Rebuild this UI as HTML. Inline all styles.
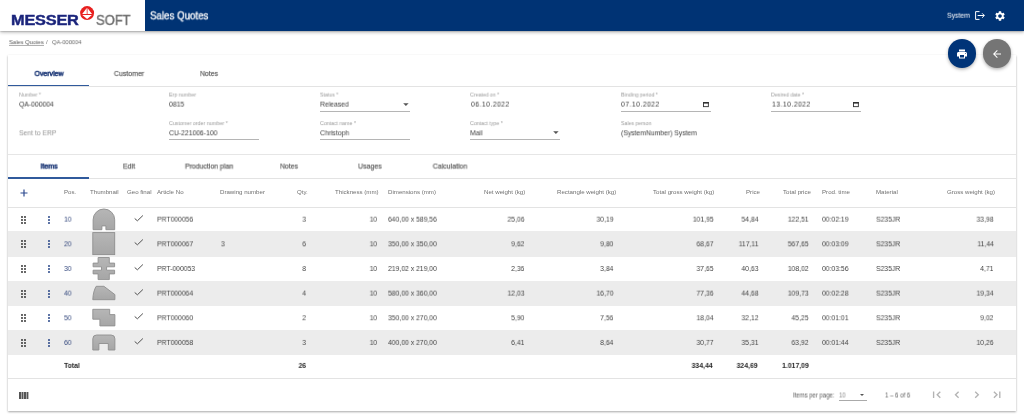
<!DOCTYPE html>
<html><head><meta charset="utf-8">
<style>
*{box-sizing:border-box;margin:0;padding:0}
html,body{width:1024px;height:415px;overflow:hidden;background:#fff;font-family:"Liberation Sans",sans-serif;color:#333}
.t{position:absolute;line-height:1;white-space:nowrap}
.b{position:absolute}
svg.b{overflow:visible}
</style></head><body><div id="root" style="position:absolute;left:0;top:0;width:1024px;height:415px;overflow:hidden;filter:blur(0.3px)">
<div class="b" style="left:0px;top:0px;width:1024px;height:31px;background:#fff;box-shadow:0 1.2px 1.5px rgba(0,0,0,.25), 0 1.5px 3.5px rgba(0,0,0,.3)"></div>
<div class="b" style="left:145px;top:0px;width:879px;height:31px;background:#003374;"></div>
<div class="t" style="left:10.90px;top:13px;font-size:13.8px;color:#1b2477;font-weight:bold;transform:translateY(0.91px) scaleX(1.185);transform-origin:0 0;will-change:transform;letter-spacing:-0.2px;-webkit-text-stroke:0.4px #1f2a88">MESSER</div>
<div class="t" style="left:96.30px;top:13px;font-size:13.8px;color:#6c6c6c;transform:translateY(0.91px) scaleX(0.94);transform-origin:0 0;will-change:transform;-webkit-text-stroke:0.45px #7b7b7b">SOFT</div>
<svg class="b" style="left:76px;top:2px" width="22" height="22" viewBox="76 2 22 22">
<circle cx="87.1" cy="13.1" r="7.0" fill="#e8201f"/>
<path fill="#fff" d="M86.75 8.0 L82.2 14.1 H86.75 Z M87.5 8.0 V14.1 H92.0 Z M82.3 15.0 H91.9 L87.1 19.0 Z"/>
</svg>
<div class="t" style="left:149.80px;top:11px;font-size:10.24px;color:#fff;transform:translateY(0.35px) scaleX(0.95);transform-origin:0 0;will-change:transform;-webkit-text-stroke-width:0.3px">Sales Quotes</div>
<div class="t" style="left:946.80px;top:12px;font-size:7.17px;color:#fff;transform:translateY(0.75px) scaleX(0.958);transform-origin:0 0;will-change:transform;">System</div>
<svg class="b" style="left:974px;top:10px" width="12" height="11" viewBox="0 0 12 11">
<path d="M5.5 1.6 H1.6 V9.4 H5.5" fill="none" stroke="#fff" stroke-width="1"/>
<path d="M3.6 5.5 H10.3 M8.1 3.3 L10.3 5.5 L8.1 7.7" fill="none" stroke="#fff" stroke-width="1"/>
</svg>
<svg class="b" style="left:994px;top:9.5px" width="12" height="12" viewBox="0 0 24 24">
<path fill="#fff" d="M19.14 12.94c.04-.3.06-.61.06-.94 0-.32-.02-.64-.07-.94l2.03-1.58a.49.49 0 0 0 .12-.61l-1.92-3.32a.488.488 0 0 0-.59-.22l-2.39.96c-.5-.38-1.030-.7-1.62-.94l-.36-2.54a.484.484 0 0 0-.48-.41h-3.84c-.24 0-.43.17-.47.41l-.36 2.54c-.59.24-1.13.57-1.62.94l-2.39-.96c-.22-.08-.47 0-.59.22L2.74 8.87c-.12.21-.08.47.12.61l2.03 1.58c-.05.3-.09.63-.09.94s.02.64.07.94l-2.03 1.58a.49.49 0 0 0-.12.61l1.92 3.32c.12.22.37.29.59.22l2.39-.96c.5.38 1.03.7 1.62.94l.36 2.54c.05.24.24.41.48.41h3.84c.24 0 .44-.17.47-.41l.36-2.54c.59-.24 1.13-.56 1.62-.94l2.39.96c.22.08.47 0 .59-.22l1.92-3.32c.12-.22.07-.47-.12-.61l-2.01-1.58zM12 15.6c-1.98 0-3.6-1.62-3.6-3.6s1.62-3.6 3.6-3.6 3.6 1.62 3.6 3.6-1.62 3.6-3.6 3.6z"/>
</svg>
<div class="t" style="left:8.70px;top:39px;font-size:6.14px;color:#595959;transform:translateY(0.11px) scaleX(0.946);transform-origin:0 0;will-change:transform;">Sales Quotes</div>
<div class="b" style="left:8.7px;top:44.9px;width:34.9px;height:0.6px;background:#b0b0b0;"></div>
<div class="t" style="left:46.30px;top:39px;font-size:6.14px;color:#777777;transform:translateY(0.11px) scaleX(1.0);transform-origin:0 0;will-change:transform;">/</div>
<div class="t" style="left:51.50px;top:39px;font-size:6.14px;color:#686868;transform:translateY(0.11px) scaleX(0.94);transform-origin:0 0;will-change:transform;">QA-000004</div>
<div class="b" style="left:8px;top:55px;width:1008px;height:356px;background:#fff;box-shadow:0 0.5px 2px rgba(0,0,0,.35)"></div>
<div class="b" style="left:947.8px;top:39.3px;width:28.4px;height:28.4px;background:#003478;border-radius:50%;box-shadow:0 1.5px 3.5px rgba(0,0,0,.3)"></div>
<div class="b" style="left:982.6px;top:39.3px;width:28.4px;height:28.4px;background:#757575;border-radius:50%;box-shadow:0 1.5px 3.5px rgba(0,0,0,.3)"></div>
<svg class="b" style="left:956px;top:47.5px" width="12" height="12" viewBox="0 0 24 24">
<path fill="#fff" d="M19 8H5c-1.66 0-3 1.34-3 3v6h4v4h12v-4h4v-6c0-1.66-1.34-3-3-3zm-3 11H8v-5h8v5zm3-7c-.55 0-1-.45-1-1s.45-1 1-1 1 .45 1 1-.45 1-1 1zm-1-9H6v4h12V3z"/>
</svg>
<svg class="b" style="left:990.8px;top:47.5px" width="12" height="12" viewBox="0 0 24 24">
<path fill="#fff" d="M20 11H7.83l5.59-5.59L12 4l-8 8 8 8 1.41-1.41L7.83 13H20v-2z"/>
</svg>
<div class="t" style="left:-51.40px;width:200px;text-align:center;top:70px;font-size:7.17px;color:#27417d;transform:translateY(0.90px) scaleX(0.97);transform-origin:50% 0;will-change:transform;-webkit-text-stroke-width:0.6px">Overview</div>
<div class="t" style="left:29.00px;width:200px;text-align:center;top:70px;font-size:7.17px;color:#696969;transform:translateY(0.90px) scaleX(0.97);transform-origin:50% 0;will-change:transform;-webkit-text-stroke-width:0.25px">Customer</div>
<div class="t" style="left:109.40px;width:200px;text-align:center;top:70px;font-size:7.17px;color:#696969;transform:translateY(0.90px) scaleX(0.97);transform-origin:50% 0;will-change:transform;-webkit-text-stroke-width:0.25px">Notes</div>
<div class="b" style="left:8px;top:85.8px;width:1008px;height:0.8px;background:#e3e3e3;"></div>
<div class="b" style="left:8.2px;top:84.8px;width:80.7px;height:1.4px;background:#305a9c;"></div>
<div class="t" style="left:18.80px;top:92px;font-size:5.38px;color:#9a9a9a;transform:translateY(0.51px) scaleX(0.97);transform-origin:0 0;will-change:transform;">Number *</div>
<div class="t" style="left:18.80px;top:101px;font-size:7.17px;color:#3b3b3b;transform:translateY(0.60px) scaleX(0.95);transform-origin:0 0;will-change:transform;">QA-000004</div>
<div class="t" style="left:169.00px;top:92px;font-size:5.38px;color:#9a9a9a;transform:translateY(0.51px) scaleX(0.97);transform-origin:0 0;will-change:transform;">Erp number</div>
<div class="t" style="left:169.00px;top:101px;font-size:7.17px;color:#3b3b3b;transform:translateY(0.60px) scaleX(0.95);transform-origin:0 0;will-change:transform;">0815</div>
<div class="t" style="left:319.75px;top:92px;font-size:5.38px;color:#9a9a9a;transform:translateY(0.51px) scaleX(0.97);transform-origin:0 0;will-change:transform;">Status *</div>
<div class="t" style="left:319.75px;top:101px;font-size:7.17px;color:#3b3b3b;transform:translateY(0.60px) scaleX(0.95);transform-origin:0 0;will-change:transform;">Released</div>
<div class="b" style="left:319.75px;top:111.0px;width:90px;height:0.8px;background:#b5b5b5;"></div>
<svg class="b" style="left:402.75px;top:102.50px" width="6" height="4" viewBox="0 0 6 4"><path d="M0.2 0.2 H5.6 L2.9 2.9 Z" fill="#555"/></svg>
<div class="t" style="left:470.30px;top:92px;font-size:5.38px;color:#9a9a9a;transform:translateY(0.51px) scaleX(0.97);transform-origin:0 0;will-change:transform;">Created on *</div>
<div class="t" style="left:471.00px;top:101px;font-size:7.17px;color:#3b3b3b;transform:translateY(0.60px) scaleX(0.95);transform-origin:0 0;will-change:transform;letter-spacing:0.5px">06.10.2022</div>
<div class="t" style="left:620.75px;top:92px;font-size:5.38px;color:#9a9a9a;transform:translateY(0.51px) scaleX(0.97);transform-origin:0 0;will-change:transform;">Binding period *</div>
<div class="t" style="left:621.25px;top:101px;font-size:7.17px;color:#3b3b3b;transform:translateY(0.60px) scaleX(0.95);transform-origin:0 0;will-change:transform;letter-spacing:0.5px">07.10.2022</div>
<div class="b" style="left:620.75px;top:111.0px;width:90px;height:0.8px;background:#b5b5b5;"></div>
<svg class="b" style="left:703.15px;top:101.60px" width="6" height="6" viewBox="0 0 6 6"><rect x="0.45" y="0.45" width="4.9" height="4.2" fill="none" stroke="#333" stroke-width="0.9"/><rect x="0" y="0" width="5.8" height="1.6" fill="#333"/></svg>
<div class="t" style="left:771.00px;top:92px;font-size:5.38px;color:#9a9a9a;transform:translateY(0.51px) scaleX(0.97);transform-origin:0 0;will-change:transform;">Desired date *</div>
<div class="t" style="left:771.50px;top:101px;font-size:7.17px;color:#3b3b3b;transform:translateY(0.60px) scaleX(0.95);transform-origin:0 0;will-change:transform;letter-spacing:0.5px">13.10.2022</div>
<div class="b" style="left:771.0px;top:111.0px;width:90px;height:0.8px;background:#b5b5b5;"></div>
<svg class="b" style="left:853.40px;top:101.60px" width="6" height="6" viewBox="0 0 6 6"><rect x="0.45" y="0.45" width="4.9" height="4.2" fill="none" stroke="#333" stroke-width="0.9"/><rect x="0" y="0" width="5.8" height="1.6" fill="#333"/></svg>
<div class="t" style="left:18.80px;top:130px;font-size:7.17px;color:#939393;transform:translateY(0.30px) scaleX(0.95);transform-origin:0 0;will-change:transform;">Sent to ERP</div>
<div class="t" style="left:169.00px;top:121px;font-size:5.38px;color:#9a9a9a;transform:translateY(0.11px) scaleX(0.97);transform-origin:0 0;will-change:transform;">Customer order number *</div>
<div class="t" style="left:169.00px;top:130px;font-size:7.17px;color:#3b3b3b;transform:translateY(0.30px) scaleX(0.95);transform-origin:0 0;will-change:transform;">CU-221006-100</div>
<div class="b" style="left:169.0px;top:139.4px;width:90px;height:0.8px;background:#b5b5b5;"></div>
<div class="t" style="left:319.75px;top:121px;font-size:5.38px;color:#9a9a9a;transform:translateY(0.11px) scaleX(0.97);transform-origin:0 0;will-change:transform;">Contact name *</div>
<div class="t" style="left:319.75px;top:130px;font-size:7.17px;color:#3b3b3b;transform:translateY(0.30px) scaleX(0.95);transform-origin:0 0;will-change:transform;">Christoph</div>
<div class="b" style="left:319.75px;top:139.4px;width:90px;height:0.8px;background:#b5b5b5;"></div>
<div class="t" style="left:470.30px;top:121px;font-size:5.38px;color:#9a9a9a;transform:translateY(0.11px) scaleX(0.97);transform-origin:0 0;will-change:transform;">Contact type *</div>
<div class="t" style="left:470.30px;top:130px;font-size:7.17px;color:#3b3b3b;transform:translateY(0.30px) scaleX(0.95);transform-origin:0 0;will-change:transform;">Mail</div>
<div class="b" style="left:470.3px;top:139.4px;width:90px;height:0.8px;background:#b5b5b5;"></div>
<svg class="b" style="left:553.30px;top:131.20px" width="6" height="4" viewBox="0 0 6 4"><path d="M0.2 0.2 H5.6 L2.9 2.9 Z" fill="#555"/></svg>
<div class="t" style="left:620.75px;top:121px;font-size:5.38px;color:#9a9a9a;transform:translateY(0.11px) scaleX(0.97);transform-origin:0 0;will-change:transform;">Sales person</div>
<div class="t" style="left:620.75px;top:130px;font-size:7.17px;color:#3b3b3b;transform:translateY(0.30px) scaleX(0.95);transform-origin:0 0;will-change:transform;">(SystemNumber) System</div>
<div class="b" style="left:8px;top:154px;width:1008px;height:0.8px;background:#e6e6e6;"></div>
<div class="t" style="left:-51.40px;width:200px;text-align:center;top:163px;font-size:7.17px;color:#27417d;transform:translateY(0.55px) scaleX(0.97);transform-origin:50% 0;will-change:transform;-webkit-text-stroke-width:0.6px">Items</div>
<div class="t" style="left:28.85px;width:200px;text-align:center;top:163px;font-size:7.17px;color:#696969;transform:translateY(0.55px) scaleX(0.97);transform-origin:50% 0;will-change:transform;-webkit-text-stroke-width:0.25px">Edit</div>
<div class="t" style="left:109.10px;width:200px;text-align:center;top:163px;font-size:7.17px;color:#696969;transform:translateY(0.55px) scaleX(0.97);transform-origin:50% 0;will-change:transform;-webkit-text-stroke-width:0.25px">Production plan</div>
<div class="t" style="left:189.35px;width:200px;text-align:center;top:163px;font-size:7.17px;color:#696969;transform:translateY(0.55px) scaleX(0.97);transform-origin:50% 0;will-change:transform;-webkit-text-stroke-width:0.25px">Notes</div>
<div class="t" style="left:269.60px;width:200px;text-align:center;top:163px;font-size:7.17px;color:#696969;transform:translateY(0.55px) scaleX(0.97);transform-origin:50% 0;will-change:transform;-webkit-text-stroke-width:0.25px">Usages</div>
<div class="t" style="left:349.85px;width:200px;text-align:center;top:163px;font-size:7.17px;color:#696969;transform:translateY(0.55px) scaleX(0.97);transform-origin:50% 0;will-change:transform;-webkit-text-stroke-width:0.25px">Calculation</div>
<div class="b" style="left:8px;top:178.4px;width:1008px;height:0.8px;background:#e3e3e3;"></div>
<div class="b" style="left:8.2px;top:177.4px;width:80.7px;height:1.4px;background:#305a9c;"></div>
<svg class="b" style="left:19.6px;top:188.8px" width="8" height="8" viewBox="0 0 8 8"><path d="M4 0.5V7.5M0.5 4H7.5" stroke="#2d4a8f" stroke-width="1.2"/></svg>
<div class="t" style="left:63.90px;top:189px;font-size:6.14px;color:#707070;transform:translateY(0.41px) scaleX(1.0);transform-origin:0 0;will-change:transform;">Pos.</div>
<div class="t" style="left:90.00px;top:189px;font-size:6.14px;color:#707070;transform:translateY(0.41px) scaleX(1.0);transform-origin:0 0;will-change:transform;">Thumbnail</div>
<div class="t" style="left:127.00px;top:189px;font-size:6.14px;color:#707070;transform:translateY(0.41px) scaleX(1.0);transform-origin:0 0;will-change:transform;">Geo final</div>
<div class="t" style="left:156.80px;top:189px;font-size:6.14px;color:#707070;transform:translateY(0.41px) scaleX(1.0);transform-origin:0 0;will-change:transform;">Article No</div>
<div class="t" style="left:220.00px;top:189px;font-size:6.14px;color:#707070;transform:translateY(0.41px) scaleX(1.0);transform-origin:0 0;will-change:transform;">Drawing number</div>
<div class="t" style="right:716.20px;top:189px;font-size:6.14px;color:#707070;transform:translateY(0.41px) scaleX(1.0);transform-origin:100% 0;will-change:transform;">Qty.</div>
<div class="t" style="right:645.00px;top:189px;font-size:6.14px;color:#707070;transform:translateY(0.41px) scaleX(1.0);transform-origin:100% 0;will-change:transform;">Thickness (mm)</div>
<div class="t" style="left:387.80px;top:189px;font-size:6.14px;color:#707070;transform:translateY(0.41px) scaleX(1.0);transform-origin:0 0;will-change:transform;">Dimensions (mm)</div>
<div class="t" style="right:499.00px;top:189px;font-size:6.14px;color:#707070;transform:translateY(0.41px) scaleX(1.0);transform-origin:100% 0;will-change:transform;">Net weight (kg)</div>
<div class="t" style="right:408.20px;top:189px;font-size:6.14px;color:#707070;transform:translateY(0.41px) scaleX(1.0);transform-origin:100% 0;will-change:transform;">Rectangle weight (kg)</div>
<div class="t" style="right:309.50px;top:189px;font-size:6.14px;color:#707070;transform:translateY(0.41px) scaleX(1.0);transform-origin:100% 0;will-change:transform;">Total gross weight (kg)</div>
<div class="t" style="right:264.50px;top:189px;font-size:6.14px;color:#707070;transform:translateY(0.41px) scaleX(1.0);transform-origin:100% 0;will-change:transform;">Price</div>
<div class="t" style="right:213.50px;top:189px;font-size:6.14px;color:#707070;transform:translateY(0.41px) scaleX(1.0);transform-origin:100% 0;will-change:transform;">Total price</div>
<div class="t" style="left:821.80px;top:189px;font-size:6.14px;color:#707070;transform:translateY(0.41px) scaleX(1.0);transform-origin:0 0;will-change:transform;">Prod. time</div>
<div class="t" style="left:876.30px;top:189px;font-size:6.14px;color:#707070;transform:translateY(0.41px) scaleX(1.0);transform-origin:0 0;will-change:transform;">Material</div>
<div class="t" style="right:29.00px;top:189px;font-size:6.14px;color:#707070;transform:translateY(0.41px) scaleX(1.0);transform-origin:100% 0;will-change:transform;">Gross weight (kg)</div>
<div class="b" style="left:8px;top:206.8px;width:1008px;height:0.8px;background:#e3e3e3;"></div>
<svg class="b" style="left:21.05px;top:215.55px" width="6" height="9" viewBox="0 0 6 9" fill="#222"><circle cx="1" cy="1" r="0.9"/><circle cx="1" cy="4" r="0.9"/><circle cx="1" cy="7" r="0.9"/><circle cx="4" cy="1" r="0.9"/><circle cx="4" cy="4" r="0.9"/><circle cx="4" cy="7" r="0.9"/></svg>
<svg class="b" style="left:47.55px;top:215.55px" width="2" height="9" viewBox="0 0 2 9" fill="#1b3a80"><circle cx="1" cy="1" r="0.95"/><circle cx="1" cy="4" r="0.95"/><circle cx="1" cy="7" r="0.95"/></svg>
<div class="t" style="left:64.00px;top:215px;font-size:7.4px;color:#35497e;transform:translateY(0.65px) scaleX(0.92);transform-origin:0 0;will-change:transform;">10</div>
<svg class="b" style="left:90px;top:205px" width="28" height="150" viewBox="90 205 28 150"><defs><linearGradient id="g0" x1="0" y1="0" x2="0" y2="1"><stop offset="0" stop-color="#b6b6b6"/><stop offset="1" stop-color="#a6a6a6"/></linearGradient></defs><g fill="url(#g0)" stroke="#8e8e8e" stroke-width="0.9"><path d="M93.1 229.7 V219.8 A10.8 10.8 0 0 1 114.7 219.8 V229.7 H105.9 V225.9 H101.9 V229.7 Z"/></g></svg>
<svg class="b" style="left:133px;top:214.55px" width="11" height="8" viewBox="0 0 11 8"><path d="M1.7 3.5 L4.4 5.8 L9.9 0.5" fill="none" stroke="#505050" stroke-width="1.0"/></svg>
<div class="t" style="left:156.80px;top:215px;font-size:7.4px;color:#434343;transform:translateY(0.65px) scaleX(0.92);transform-origin:0 0;will-change:transform;">PRT000056</div>
<div class="t" style="right:717.70px;top:215px;font-size:7.4px;color:#434343;transform:translateY(0.65px) scaleX(0.92);transform-origin:100% 0;will-change:transform;">3</div>
<div class="t" style="right:646.70px;top:215px;font-size:7.4px;color:#434343;transform:translateY(0.65px) scaleX(0.92);transform-origin:100% 0;will-change:transform;">10</div>
<div class="t" style="left:387.80px;top:215px;font-size:7.4px;color:#434343;transform:translateY(0.65px) scaleX(0.92);transform-origin:0 0;will-change:transform;">640,00 x 589,56</div>
<div class="t" style="right:499.80px;top:215px;font-size:7.4px;color:#434343;transform:translateY(0.65px) scaleX(0.92);transform-origin:100% 0;will-change:transform;">25,06</div>
<div class="t" style="right:410.20px;top:215px;font-size:7.4px;color:#434343;transform:translateY(0.65px) scaleX(0.92);transform-origin:100% 0;will-change:transform;">30,19</div>
<div class="t" style="right:310.80px;top:215px;font-size:7.4px;color:#434343;transform:translateY(0.65px) scaleX(0.92);transform-origin:100% 0;will-change:transform;">101,95</div>
<div class="t" style="right:265.80px;top:215px;font-size:7.4px;color:#434343;transform:translateY(0.65px) scaleX(0.92);transform-origin:100% 0;will-change:transform;">54,84</div>
<div class="t" style="right:215.60px;top:215px;font-size:7.4px;color:#434343;transform:translateY(0.65px) scaleX(0.92);transform-origin:100% 0;will-change:transform;">122,51</div>
<div class="t" style="left:821.60px;top:215px;font-size:7.4px;color:#434343;transform:translateY(0.65px) scaleX(0.92);transform-origin:0 0;will-change:transform;">00:02:19</div>
<div class="t" style="left:876.30px;top:215px;font-size:7.4px;color:#434343;transform:translateY(0.65px) scaleX(0.92);transform-origin:0 0;will-change:transform;">S235JR</div>
<div class="t" style="right:30.50px;top:215px;font-size:7.4px;color:#434343;transform:translateY(0.65px) scaleX(0.92);transform-origin:100% 0;will-change:transform;">33,98</div>
<div class="b" style="left:8px;top:231.2px;width:1008px;height:25.5px;background:#ececec;"></div>
<svg class="b" style="left:21.05px;top:240.20px" width="6" height="9" viewBox="0 0 6 9" fill="#222"><circle cx="1" cy="1" r="0.9"/><circle cx="1" cy="4" r="0.9"/><circle cx="1" cy="7" r="0.9"/><circle cx="4" cy="1" r="0.9"/><circle cx="4" cy="4" r="0.9"/><circle cx="4" cy="7" r="0.9"/></svg>
<svg class="b" style="left:47.55px;top:240.20px" width="2" height="9" viewBox="0 0 2 9" fill="#1b3a80"><circle cx="1" cy="1" r="0.95"/><circle cx="1" cy="4" r="0.95"/><circle cx="1" cy="7" r="0.95"/></svg>
<div class="t" style="left:64.00px;top:240px;font-size:7.4px;color:#35497e;transform:translateY(0.30px) scaleX(0.92);transform-origin:0 0;will-change:transform;">20</div>
<svg class="b" style="left:90px;top:205px" width="28" height="150" viewBox="90 205 28 150"><defs><linearGradient id="g1" x1="0" y1="0" x2="0" y2="1"><stop offset="0" stop-color="#b6b6b6"/><stop offset="1" stop-color="#a6a6a6"/></linearGradient></defs><g fill="url(#g1)" stroke="#8e8e8e" stroke-width="0.9"><rect x="92.8" y="232.6" width="21.9" height="22"/></g></svg>
<svg class="b" style="left:133px;top:239.20px" width="11" height="8" viewBox="0 0 11 8"><path d="M1.7 3.5 L4.4 5.8 L9.9 0.5" fill="none" stroke="#505050" stroke-width="1.0"/></svg>
<div class="t" style="left:156.80px;top:240px;font-size:7.4px;color:#434343;transform:translateY(0.30px) scaleX(0.92);transform-origin:0 0;will-change:transform;">PRT000067</div>
<div class="t" style="left:220.50px;top:240px;font-size:7.4px;color:#434343;transform:translateY(0.30px) scaleX(0.92);transform-origin:0 0;will-change:transform;">3</div>
<div class="t" style="right:717.70px;top:240px;font-size:7.4px;color:#434343;transform:translateY(0.30px) scaleX(0.92);transform-origin:100% 0;will-change:transform;">6</div>
<div class="t" style="right:646.70px;top:240px;font-size:7.4px;color:#434343;transform:translateY(0.30px) scaleX(0.92);transform-origin:100% 0;will-change:transform;">10</div>
<div class="t" style="left:387.80px;top:240px;font-size:7.4px;color:#434343;transform:translateY(0.30px) scaleX(0.92);transform-origin:0 0;will-change:transform;">350,00 x 350,00</div>
<div class="t" style="right:499.80px;top:240px;font-size:7.4px;color:#434343;transform:translateY(0.30px) scaleX(0.92);transform-origin:100% 0;will-change:transform;">9,62</div>
<div class="t" style="right:410.20px;top:240px;font-size:7.4px;color:#434343;transform:translateY(0.30px) scaleX(0.92);transform-origin:100% 0;will-change:transform;">9,80</div>
<div class="t" style="right:310.80px;top:240px;font-size:7.4px;color:#434343;transform:translateY(0.30px) scaleX(0.92);transform-origin:100% 0;will-change:transform;">68,67</div>
<div class="t" style="right:265.80px;top:240px;font-size:7.4px;color:#434343;transform:translateY(0.30px) scaleX(0.92);transform-origin:100% 0;will-change:transform;">117,11</div>
<div class="t" style="right:215.60px;top:240px;font-size:7.4px;color:#434343;transform:translateY(0.30px) scaleX(0.92);transform-origin:100% 0;will-change:transform;">567,65</div>
<div class="t" style="left:821.60px;top:240px;font-size:7.4px;color:#434343;transform:translateY(0.30px) scaleX(0.92);transform-origin:0 0;will-change:transform;">00:03:09</div>
<div class="t" style="left:876.30px;top:240px;font-size:7.4px;color:#434343;transform:translateY(0.30px) scaleX(0.92);transform-origin:0 0;will-change:transform;">S235JR</div>
<div class="t" style="right:30.50px;top:240px;font-size:7.4px;color:#434343;transform:translateY(0.30px) scaleX(0.92);transform-origin:100% 0;will-change:transform;">11,44</div>
<svg class="b" style="left:21.05px;top:264.85px" width="6" height="9" viewBox="0 0 6 9" fill="#222"><circle cx="1" cy="1" r="0.9"/><circle cx="1" cy="4" r="0.9"/><circle cx="1" cy="7" r="0.9"/><circle cx="4" cy="1" r="0.9"/><circle cx="4" cy="4" r="0.9"/><circle cx="4" cy="7" r="0.9"/></svg>
<svg class="b" style="left:47.55px;top:264.85px" width="2" height="9" viewBox="0 0 2 9" fill="#1b3a80"><circle cx="1" cy="1" r="0.95"/><circle cx="1" cy="4" r="0.95"/><circle cx="1" cy="7" r="0.95"/></svg>
<div class="t" style="left:64.00px;top:264px;font-size:7.4px;color:#35497e;transform:translateY(0.95px) scaleX(0.92);transform-origin:0 0;will-change:transform;">30</div>
<svg class="b" style="left:90px;top:205px" width="28" height="150" viewBox="90 205 28 150"><defs><linearGradient id="g2" x1="0" y1="0" x2="0" y2="1"><stop offset="0" stop-color="#b6b6b6"/><stop offset="1" stop-color="#a6a6a6"/></linearGradient></defs><g fill="url(#g2)" stroke="#8e8e8e" stroke-width="0.9"><path d="M98.1 257.5 H109.3 V263.1 H114.6 V266.8 H106.6 V270.2 H114.6 V273.9 H109.3 V279.6 H98.1 V273.9 H93.1 V270.2 H101.5 V266.8 H93.1 V263.1 H98.1 Z"/></g></svg>
<svg class="b" style="left:133px;top:263.85px" width="11" height="8" viewBox="0 0 11 8"><path d="M1.7 3.5 L4.4 5.8 L9.9 0.5" fill="none" stroke="#505050" stroke-width="1.0"/></svg>
<div class="t" style="left:156.80px;top:264px;font-size:7.4px;color:#434343;transform:translateY(0.95px) scaleX(0.92);transform-origin:0 0;will-change:transform;">PRT-000053</div>
<div class="t" style="right:717.70px;top:264px;font-size:7.4px;color:#434343;transform:translateY(0.95px) scaleX(0.92);transform-origin:100% 0;will-change:transform;">8</div>
<div class="t" style="right:646.70px;top:264px;font-size:7.4px;color:#434343;transform:translateY(0.95px) scaleX(0.92);transform-origin:100% 0;will-change:transform;">10</div>
<div class="t" style="left:387.80px;top:264px;font-size:7.4px;color:#434343;transform:translateY(0.95px) scaleX(0.92);transform-origin:0 0;will-change:transform;">219,02 x 219,00</div>
<div class="t" style="right:499.80px;top:264px;font-size:7.4px;color:#434343;transform:translateY(0.95px) scaleX(0.92);transform-origin:100% 0;will-change:transform;">2,36</div>
<div class="t" style="right:410.20px;top:264px;font-size:7.4px;color:#434343;transform:translateY(0.95px) scaleX(0.92);transform-origin:100% 0;will-change:transform;">3,84</div>
<div class="t" style="right:310.80px;top:264px;font-size:7.4px;color:#434343;transform:translateY(0.95px) scaleX(0.92);transform-origin:100% 0;will-change:transform;">37,65</div>
<div class="t" style="right:265.80px;top:264px;font-size:7.4px;color:#434343;transform:translateY(0.95px) scaleX(0.92);transform-origin:100% 0;will-change:transform;">40,63</div>
<div class="t" style="right:215.60px;top:264px;font-size:7.4px;color:#434343;transform:translateY(0.95px) scaleX(0.92);transform-origin:100% 0;will-change:transform;">108,02</div>
<div class="t" style="left:821.60px;top:264px;font-size:7.4px;color:#434343;transform:translateY(0.95px) scaleX(0.92);transform-origin:0 0;will-change:transform;">00:03:56</div>
<div class="t" style="left:876.30px;top:264px;font-size:7.4px;color:#434343;transform:translateY(0.95px) scaleX(0.92);transform-origin:0 0;will-change:transform;">S235JR</div>
<div class="t" style="right:30.50px;top:264px;font-size:7.4px;color:#434343;transform:translateY(0.95px) scaleX(0.92);transform-origin:100% 0;will-change:transform;">4,71</div>
<div class="b" style="left:8px;top:280.5px;width:1008px;height:25.5px;background:#ececec;"></div>
<svg class="b" style="left:21.05px;top:289.50px" width="6" height="9" viewBox="0 0 6 9" fill="#222"><circle cx="1" cy="1" r="0.9"/><circle cx="1" cy="4" r="0.9"/><circle cx="1" cy="7" r="0.9"/><circle cx="4" cy="1" r="0.9"/><circle cx="4" cy="4" r="0.9"/><circle cx="4" cy="7" r="0.9"/></svg>
<svg class="b" style="left:47.55px;top:289.50px" width="2" height="9" viewBox="0 0 2 9" fill="#1b3a80"><circle cx="1" cy="1" r="0.95"/><circle cx="1" cy="4" r="0.95"/><circle cx="1" cy="7" r="0.95"/></svg>
<div class="t" style="left:64.00px;top:289px;font-size:7.4px;color:#35497e;transform:translateY(0.60px) scaleX(0.92);transform-origin:0 0;will-change:transform;">40</div>
<svg class="b" style="left:90px;top:205px" width="28" height="150" viewBox="90 205 28 150"><defs><linearGradient id="g3" x1="0" y1="0" x2="0" y2="1"><stop offset="0" stop-color="#b6b6b6"/><stop offset="1" stop-color="#a6a6a6"/></linearGradient></defs><g fill="url(#g3)" stroke="#8e8e8e" stroke-width="0.9"><path d="M92.8 299.7 C93 294 94.2 289.5 96.2 286.3 H103.9 L114.9 294.6 V299.7 Z"/></g></svg>
<svg class="b" style="left:133px;top:288.50px" width="11" height="8" viewBox="0 0 11 8"><path d="M1.7 3.5 L4.4 5.8 L9.9 0.5" fill="none" stroke="#505050" stroke-width="1.0"/></svg>
<div class="t" style="left:156.80px;top:289px;font-size:7.4px;color:#434343;transform:translateY(0.60px) scaleX(0.92);transform-origin:0 0;will-change:transform;">PRT000064</div>
<div class="t" style="right:717.70px;top:289px;font-size:7.4px;color:#434343;transform:translateY(0.60px) scaleX(0.92);transform-origin:100% 0;will-change:transform;">4</div>
<div class="t" style="right:646.70px;top:289px;font-size:7.4px;color:#434343;transform:translateY(0.60px) scaleX(0.92);transform-origin:100% 0;will-change:transform;">10</div>
<div class="t" style="left:387.80px;top:289px;font-size:7.4px;color:#434343;transform:translateY(0.60px) scaleX(0.92);transform-origin:0 0;will-change:transform;">580,00 x 360,00</div>
<div class="t" style="right:499.80px;top:289px;font-size:7.4px;color:#434343;transform:translateY(0.60px) scaleX(0.92);transform-origin:100% 0;will-change:transform;">12,03</div>
<div class="t" style="right:410.20px;top:289px;font-size:7.4px;color:#434343;transform:translateY(0.60px) scaleX(0.92);transform-origin:100% 0;will-change:transform;">16,70</div>
<div class="t" style="right:310.80px;top:289px;font-size:7.4px;color:#434343;transform:translateY(0.60px) scaleX(0.92);transform-origin:100% 0;will-change:transform;">77,36</div>
<div class="t" style="right:265.80px;top:289px;font-size:7.4px;color:#434343;transform:translateY(0.60px) scaleX(0.92);transform-origin:100% 0;will-change:transform;">44,68</div>
<div class="t" style="right:215.60px;top:289px;font-size:7.4px;color:#434343;transform:translateY(0.60px) scaleX(0.92);transform-origin:100% 0;will-change:transform;">109,73</div>
<div class="t" style="left:821.60px;top:289px;font-size:7.4px;color:#434343;transform:translateY(0.60px) scaleX(0.92);transform-origin:0 0;will-change:transform;">00:02:28</div>
<div class="t" style="left:876.30px;top:289px;font-size:7.4px;color:#434343;transform:translateY(0.60px) scaleX(0.92);transform-origin:0 0;will-change:transform;">S235JR</div>
<div class="t" style="right:30.50px;top:289px;font-size:7.4px;color:#434343;transform:translateY(0.60px) scaleX(0.92);transform-origin:100% 0;will-change:transform;">19,34</div>
<svg class="b" style="left:21.05px;top:314.15px" width="6" height="9" viewBox="0 0 6 9" fill="#222"><circle cx="1" cy="1" r="0.9"/><circle cx="1" cy="4" r="0.9"/><circle cx="1" cy="7" r="0.9"/><circle cx="4" cy="1" r="0.9"/><circle cx="4" cy="4" r="0.9"/><circle cx="4" cy="7" r="0.9"/></svg>
<svg class="b" style="left:47.55px;top:314.15px" width="2" height="9" viewBox="0 0 2 9" fill="#1b3a80"><circle cx="1" cy="1" r="0.95"/><circle cx="1" cy="4" r="0.95"/><circle cx="1" cy="7" r="0.95"/></svg>
<div class="t" style="left:64.00px;top:314px;font-size:7.4px;color:#35497e;transform:translateY(0.25px) scaleX(0.92);transform-origin:0 0;will-change:transform;">50</div>
<svg class="b" style="left:90px;top:205px" width="28" height="150" viewBox="90 205 28 150"><defs><linearGradient id="g4" x1="0" y1="0" x2="0" y2="1"><stop offset="0" stop-color="#b6b6b6"/><stop offset="1" stop-color="#a6a6a6"/></linearGradient></defs><g fill="url(#g4)" stroke="#8e8e8e" stroke-width="0.9"><path d="M92.8 309.3 H109.7 V314.6 H114.9 V325.9 H99.9 V319.2 H92.8 Z"/></g></svg>
<svg class="b" style="left:133px;top:313.15px" width="11" height="8" viewBox="0 0 11 8"><path d="M1.7 3.5 L4.4 5.8 L9.9 0.5" fill="none" stroke="#505050" stroke-width="1.0"/></svg>
<div class="t" style="left:156.80px;top:314px;font-size:7.4px;color:#434343;transform:translateY(0.25px) scaleX(0.92);transform-origin:0 0;will-change:transform;">PRT000060</div>
<div class="t" style="right:717.70px;top:314px;font-size:7.4px;color:#434343;transform:translateY(0.25px) scaleX(0.92);transform-origin:100% 0;will-change:transform;">2</div>
<div class="t" style="right:646.70px;top:314px;font-size:7.4px;color:#434343;transform:translateY(0.25px) scaleX(0.92);transform-origin:100% 0;will-change:transform;">10</div>
<div class="t" style="left:387.80px;top:314px;font-size:7.4px;color:#434343;transform:translateY(0.25px) scaleX(0.92);transform-origin:0 0;will-change:transform;">350,00 x 270,00</div>
<div class="t" style="right:499.80px;top:314px;font-size:7.4px;color:#434343;transform:translateY(0.25px) scaleX(0.92);transform-origin:100% 0;will-change:transform;">5,90</div>
<div class="t" style="right:410.20px;top:314px;font-size:7.4px;color:#434343;transform:translateY(0.25px) scaleX(0.92);transform-origin:100% 0;will-change:transform;">7,56</div>
<div class="t" style="right:310.80px;top:314px;font-size:7.4px;color:#434343;transform:translateY(0.25px) scaleX(0.92);transform-origin:100% 0;will-change:transform;">18,04</div>
<div class="t" style="right:265.80px;top:314px;font-size:7.4px;color:#434343;transform:translateY(0.25px) scaleX(0.92);transform-origin:100% 0;will-change:transform;">32,12</div>
<div class="t" style="right:215.60px;top:314px;font-size:7.4px;color:#434343;transform:translateY(0.25px) scaleX(0.92);transform-origin:100% 0;will-change:transform;">45,25</div>
<div class="t" style="left:821.60px;top:314px;font-size:7.4px;color:#434343;transform:translateY(0.25px) scaleX(0.92);transform-origin:0 0;will-change:transform;">00:01:01</div>
<div class="t" style="left:876.30px;top:314px;font-size:7.4px;color:#434343;transform:translateY(0.25px) scaleX(0.92);transform-origin:0 0;will-change:transform;">S235JR</div>
<div class="t" style="right:30.50px;top:314px;font-size:7.4px;color:#434343;transform:translateY(0.25px) scaleX(0.92);transform-origin:100% 0;will-change:transform;">9,02</div>
<div class="b" style="left:8px;top:329.8px;width:1008px;height:25.5px;background:#ececec;"></div>
<svg class="b" style="left:21.05px;top:338.80px" width="6" height="9" viewBox="0 0 6 9" fill="#222"><circle cx="1" cy="1" r="0.9"/><circle cx="1" cy="4" r="0.9"/><circle cx="1" cy="7" r="0.9"/><circle cx="4" cy="1" r="0.9"/><circle cx="4" cy="4" r="0.9"/><circle cx="4" cy="7" r="0.9"/></svg>
<svg class="b" style="left:47.55px;top:338.80px" width="2" height="9" viewBox="0 0 2 9" fill="#1b3a80"><circle cx="1" cy="1" r="0.95"/><circle cx="1" cy="4" r="0.95"/><circle cx="1" cy="7" r="0.95"/></svg>
<div class="t" style="left:64.00px;top:338px;font-size:7.4px;color:#35497e;transform:translateY(0.90px) scaleX(0.92);transform-origin:0 0;will-change:transform;">60</div>
<svg class="b" style="left:90px;top:205px" width="28" height="150" viewBox="90 205 28 150"><defs><linearGradient id="g5" x1="0" y1="0" x2="0" y2="1"><stop offset="0" stop-color="#b6b6b6"/><stop offset="1" stop-color="#a6a6a6"/></linearGradient></defs><g fill="url(#g5)" stroke="#8e8e8e" stroke-width="0.9"><path d="M92.8 350 V338.8 Q92.8 335 96.6 335 H111.1 Q114.9 335 114.9 338.8 V350 H108.3 V343.5 H98.9 V350 Z"/></g></svg>
<svg class="b" style="left:133px;top:337.80px" width="11" height="8" viewBox="0 0 11 8"><path d="M1.7 3.5 L4.4 5.8 L9.9 0.5" fill="none" stroke="#505050" stroke-width="1.0"/></svg>
<div class="t" style="left:156.80px;top:338px;font-size:7.4px;color:#434343;transform:translateY(0.90px) scaleX(0.92);transform-origin:0 0;will-change:transform;">PRT000058</div>
<div class="t" style="right:717.70px;top:338px;font-size:7.4px;color:#434343;transform:translateY(0.90px) scaleX(0.92);transform-origin:100% 0;will-change:transform;">3</div>
<div class="t" style="right:646.70px;top:338px;font-size:7.4px;color:#434343;transform:translateY(0.90px) scaleX(0.92);transform-origin:100% 0;will-change:transform;">10</div>
<div class="t" style="left:387.80px;top:338px;font-size:7.4px;color:#434343;transform:translateY(0.90px) scaleX(0.92);transform-origin:0 0;will-change:transform;">400,00 x 270,00</div>
<div class="t" style="right:499.80px;top:338px;font-size:7.4px;color:#434343;transform:translateY(0.90px) scaleX(0.92);transform-origin:100% 0;will-change:transform;">6,41</div>
<div class="t" style="right:410.20px;top:338px;font-size:7.4px;color:#434343;transform:translateY(0.90px) scaleX(0.92);transform-origin:100% 0;will-change:transform;">8,64</div>
<div class="t" style="right:310.80px;top:338px;font-size:7.4px;color:#434343;transform:translateY(0.90px) scaleX(0.92);transform-origin:100% 0;will-change:transform;">30,77</div>
<div class="t" style="right:265.80px;top:338px;font-size:7.4px;color:#434343;transform:translateY(0.90px) scaleX(0.92);transform-origin:100% 0;will-change:transform;">35,31</div>
<div class="t" style="right:215.60px;top:338px;font-size:7.4px;color:#434343;transform:translateY(0.90px) scaleX(0.92);transform-origin:100% 0;will-change:transform;">63,92</div>
<div class="t" style="left:821.60px;top:338px;font-size:7.4px;color:#434343;transform:translateY(0.90px) scaleX(0.92);transform-origin:0 0;will-change:transform;">00:01:44</div>
<div class="t" style="left:876.30px;top:338px;font-size:7.4px;color:#434343;transform:translateY(0.90px) scaleX(0.92);transform-origin:0 0;will-change:transform;">S235JR</div>
<div class="t" style="right:30.50px;top:338px;font-size:7.4px;color:#434343;transform:translateY(0.90px) scaleX(0.92);transform-origin:100% 0;will-change:transform;">10,26</div>
<div class="t" style="left:63.95px;top:361px;font-size:7.4px;color:#1d1d1d;font-weight:bold;transform:translateY(0.90px) scaleX(0.92);transform-origin:0 0;will-change:transform;">Total</div>
<div class="t" style="right:717.60px;top:361px;font-size:7.4px;color:#1d1d1d;font-weight:bold;transform:translateY(0.90px) scaleX(0.93);transform-origin:100% 0;will-change:transform;">26</div>
<div class="t" style="right:311.20px;top:361px;font-size:7.4px;color:#1d1d1d;font-weight:bold;transform:translateY(0.90px) scaleX(0.93);transform-origin:100% 0;will-change:transform;">334,44</div>
<div class="t" style="right:266.10px;top:361px;font-size:7.4px;color:#1d1d1d;font-weight:bold;transform:translateY(0.90px) scaleX(0.93);transform-origin:100% 0;will-change:transform;">324,69</div>
<div class="t" style="right:215.50px;top:361px;font-size:7.4px;color:#1d1d1d;font-weight:bold;transform:translateY(0.90px) scaleX(0.93);transform-origin:100% 0;will-change:transform;">1.017,09</div>
<div class="b" style="left:8px;top:378.2px;width:1008px;height:0.8px;background:#e3e3e3;"></div>
<svg class="b" style="left:18.8px;top:391.5px" width="9.4" height="7" viewBox="0 0 9.4 7"><path fill="#555" d="M0 0H2V7H0ZM2.5 0H4.5V7H2.5ZM5 0H7V7H5ZM7.5 0H9.4V7H7.5Z"/></svg>
<div class="t" style="left:793.10px;top:392px;font-size:6.5px;color:#595959;transform:translateY(0.50px) scaleX(0.915);transform-origin:0 0;will-change:transform;">Items per page:</div>
<div class="t" style="left:839.20px;top:392px;font-size:6.5px;color:#868686;transform:translateY(0.50px) scaleX(0.92);transform-origin:0 0;will-change:transform;">10</div>
<div class="b" style="left:838.8px;top:400.1px;width:28.2px;height:0.7px;background:#aaa;"></div>
<div class="b" style="left:860.4px;top:394px;width:0;height:0;border-left:2.4px solid transparent;border-right:2.4px solid transparent;border-top:2.4px solid #555"></div>
<div class="t" style="left:885.00px;top:392px;font-size:6.5px;color:#5d5d5d;transform:translateY(0.50px) scaleX(0.93);transform-origin:0 0;will-change:transform;">1 – 6 of 6</div>
<svg class="b" style="left:925px;top:385px" width="85" height="20" viewBox="925 385 85 20" fill="none" stroke="#b3b3b3" stroke-width="1.35">
<path d="M933.6 391.5 V398.1 M940.3 391.8 L937.2 394.8 L940.3 397.8"/>
<path d="M958.6 391.8 L955.5 394.8 L958.6 397.8"/>
<path d="M975.2 391.8 L978.3 394.8 L975.2 397.8"/>
<path d="M993.9 391.8 L997 394.8 L993.9 397.8 M999.8 391.5 V398.1"/>
</svg>
</div></body></html>
